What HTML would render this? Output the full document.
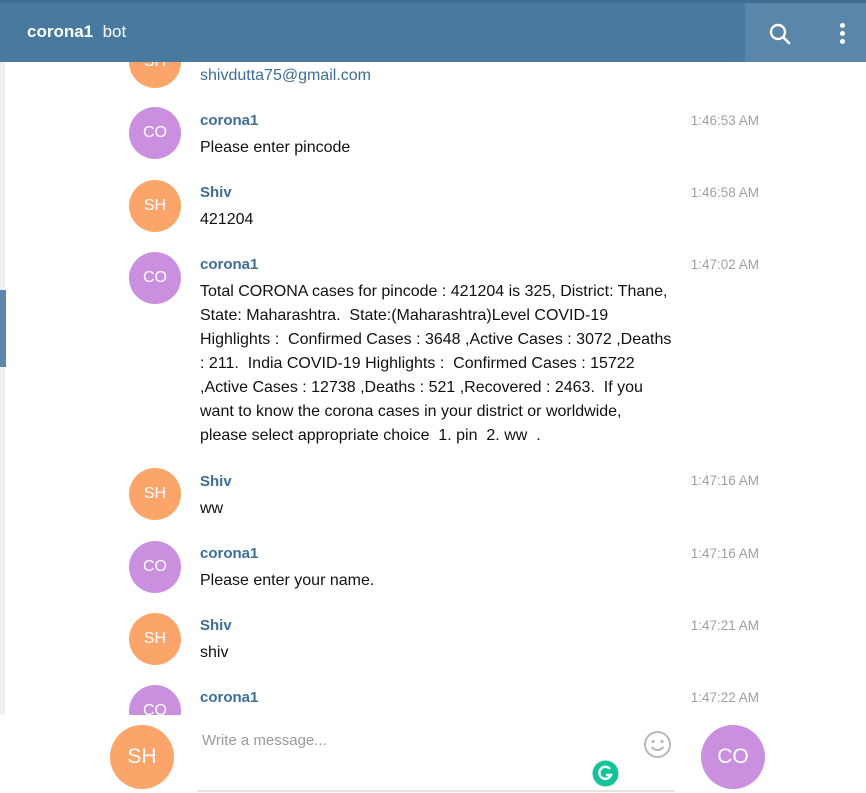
<!DOCTYPE html>
<html><head><meta charset="utf-8"><style>
*{margin:0;padding:0;box-sizing:border-box}
body{width:866px;height:793px;overflow:hidden;background:#fff;font-family:"Liberation Sans",sans-serif;position:relative}
.hdr{position:absolute;left:0;top:0;width:866px;height:62px;background:#48799f;border-top:3px solid #3f6e94}
.hdr .r{position:absolute;left:745px;top:0;width:121px;height:59px;background:#5a86aa}
.hdr .t{position:absolute;left:27px;top:19px;color:#fff;font-size:17px}
.lb{position:absolute;left:0;top:62px;width:5px;height:731px;background:#f0f0f0}
.lb2{position:absolute;left:0;top:290px;width:6px;height:77px;background:#5a87ab}
.av{position:absolute;width:52px;height:52px;border-radius:50%;color:#fff;font-size:16px;text-align:center;line-height:52px}
.sh{background:#fca56b}.co{background:#cb8fe0}
.nm{position:absolute;left:200px;font-weight:bold;color:#3f6d96;font-size:15px}
.tm{position:absolute;right:107px;color:#a0a0a0;font-size:13.5px}
.tx{position:absolute;left:200px;color:#111;font-size:16px;line-height:24px;white-space:nowrap}
.bot{position:absolute;left:0;top:715px;width:866px;height:78px;background:#fff}
</style></head><body>
<div class="lb"></div><div class="lb2"></div>
<div class="av sh" style="left:129px;top:36px">SH</div>
<div class="tx" style="top:64px;color:#3f6d96">shivdutta75@gmail.com</div>

<div class="av co" style="left:129px;top:107px">CO</div>
<div class="nm" style="top:112px">corona1</div><div class="tm" style="top:113px">1:46:53 AM</div>
<div class="tx" style="top:136px">Please enter pincode</div>

<div class="av sh" style="left:129px;top:180px">SH</div>
<div class="nm" style="top:184px">Shiv</div><div class="tm" style="top:185px">1:46:58 AM</div>
<div class="tx" style="top:208px">421204</div>

<div class="av co" style="left:129px;top:252px">CO</div>
<div class="nm" style="top:256px">corona1</div><div class="tm" style="top:257px">1:47:02 AM</div>
<div class="tx" style="top:280px">Total CORONA cases for pincode : 421204 is 325, District: Thane,<br>State: Maharashtra.&nbsp; State:(Maharashtra)Level COVID-19<br>Highlights :&nbsp; Confirmed Cases : 3648 ,Active Cases : 3072 ,Deaths<br>: 211.&nbsp; India COVID-19 Highlights :&nbsp; Confirmed Cases : 15722<br>,Active Cases : 12738 ,Deaths : 521 ,Recovered : 2463.&nbsp; If you<br>want to know the corona cases in your district or worldwide,<br>please select appropriate choice&nbsp; 1. pin&nbsp; 2. ww&nbsp; .</div>

<div class="av sh" style="left:129px;top:468px">SH</div>
<div class="nm" style="top:473px">Shiv</div><div class="tm" style="top:473px">1:47:16 AM</div>
<div class="tx" style="top:497px">ww</div>

<div class="av co" style="left:129px;top:541px">CO</div>
<div class="nm" style="top:545px">corona1</div><div class="tm" style="top:546px">1:47:16 AM</div>
<div class="tx" style="top:569px">Please enter your name.</div>

<div class="av sh" style="left:129px;top:613px">SH</div>
<div class="nm" style="top:617px">Shiv</div><div class="tm" style="top:618px">1:47:21 AM</div>
<div class="tx" style="top:641px">shiv</div>

<div class="av co" style="left:129px;top:685px">CO</div>
<div class="nm" style="top:689px">corona1</div><div class="tm" style="top:690px">1:47:22 AM</div>

<div class="bot">
<div class="av sh" style="left:110px;top:10px;width:64px;height:64px;line-height:64px;font-size:21px">SH</div>
<div style="position:absolute;left:202px;top:17px;color:#9a9a9a;font-size:15px">Write a message...</div>
<svg style="position:absolute;left:643px;top:15px" width="29" height="29" viewBox="0 0 29 29"><circle cx="14.5" cy="14.5" r="12.5" fill="none" stroke="#b8b8b8" stroke-width="2"/><circle cx="10" cy="11.5" r="1.6" fill="#b8b8b8"/><circle cx="19" cy="11.5" r="1.6" fill="#b8b8b8"/><path d="M8.5 17 Q14.5 23 20.5 17" fill="none" stroke="#b8b8b8" stroke-width="2"/></svg>
<svg style="position:absolute;left:592px;top:45px" width="27" height="27" viewBox="0 0 27 27"><circle cx="13.5" cy="13.5" r="13" fill="#15c39a"/><path d="M18 9 A6 6 0 1 0 19 15 H14" fill="none" stroke="#fff" stroke-width="2.4"/></svg>
<div class="av co" style="left:701px;top:10px;width:64px;height:64px;line-height:64px;font-size:21px">CO</div>
<div style="position:absolute;left:197px;top:75px;width:478px;height:2px;background:#e4e4e4"></div>
</div>

<div class="hdr"><div class="r"></div>
<div class="t"><b>corona1</b>&nbsp; bot</div>
<svg style="position:absolute;left:768px;top:19px" width="24" height="24" viewBox="0 0 24 24"><circle cx="10" cy="10" r="7" fill="none" stroke="#fff" stroke-width="2.4"/><path d="M15 15 L21 21" stroke="#fff" stroke-width="2.6" stroke-linecap="round"/></svg>
<div style="position:absolute;left:840px;top:20px;width:5px;height:5px;border-radius:50%;background:#fff;box-shadow:0 8px 0 #fff,0 16px 0 #fff"></div>
</div>
</body></html>
